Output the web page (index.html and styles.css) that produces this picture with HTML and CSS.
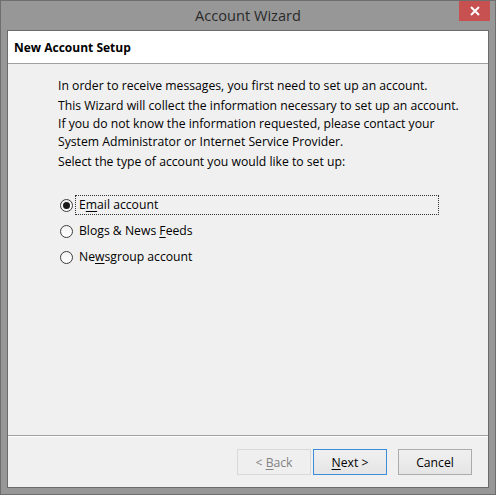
FILE: index.html
```html
<!DOCTYPE html>
<html>
<head>
<meta charset="utf-8">
<link rel="stylesheet" href="styles.css">
</head>
<body>
<div class="window">
  <div class="titlebar">
    <div class="spacer"></div>
    <div class="title">Account Wizard</div>
    <div class="close">
      <svg width="10" height="10" viewBox="0 0 10 10"><path d="M1 1 L9 9 M9 1 L1 9" stroke="#fff" stroke-width="2" fill="none"/></svg>
    </div>
  </div>
  <div class="client">
    <div class="header">New Account Setup</div>
    <div class="main">
      <p class="para">In order to receive messages, you first need to set up an account.</p>
      <p class="para">This Wizard will collect the information necessary to set up an account.<br>If you do not know the information requested, please contact your<br>System Administrator or Internet Service Provider.</p>
      <p class="para">Select the type of account you would like to set up:</p>
      <div class="options">
        <div class="option">
          <span class="radio checked"><span class="dot"></span></span>
          <span class="label focused">E<u>m</u>ail account</span>
        </div>
        <div class="option">
          <span class="radio"></span>
          <span class="label">Blogs &amp; News <u>F</u>eeds</span>
        </div>
        <div class="option">
          <span class="radio"></span>
          <span class="label">Ne<u>w</u>sgroup account</span>
        </div>
      </div>
    </div>
    <div class="footer">
      <div class="btn disabled">&lt;&nbsp;<u>B</u>ack</div>
      <div class="btn default"><u>N</u>ext&nbsp;&gt;</div>
      <div class="btn cancel">Cancel</div>
    </div>
  </div>
</div>
</body>
</html>
```
FILE: styles.css
```css
html, body {
  margin: 0;
  padding: 0;
}
body {
  width: 496px;
  height: 495px;
  font-family: "Open Sans", "Noto Sans", sans-serif;
  font-size: 12.2px;
  color: #000;
}
.window {
  width: 496px;
  height: 495px;
  box-sizing: border-box;
  border: 1px solid #6e6e6e;
  background: #979797;
  display: flex;
  flex-direction: column;
}
.titlebar {
  height: 29px;
  display: grid;
  grid-template-columns: 1fr auto 1fr;
  flex: none;
}
.title {
  font-size: 14.6px;
  color: #2a2a2a;
  line-height: 28px;
  text-align: center;
}
.close {
  justify-self: end;
  align-self: start;
  width: 31px;
  height: 20px;
  margin-right: 5px;
  background: #c75050;
  display: flex;
  align-items: center;
  justify-content: center;
}
.close svg { display: block; }
.client {
  flex: 1;
  margin: 0 6px 6px 6px;
  border: 1px solid #6b6b6b;
  background: #f0f0f0;
  display: flex;
  flex-direction: column;
}
.header {
  height: 32px;
  background: #fff;
  border-bottom: 1px solid #a0a0a0;
  display: flex;
  align-items: center;
  padding-left: 6px;
  font-weight: bold;
  font-size: 12px;
  flex: none;
}
.main {
  flex: 1;
  padding: 13px 0 0 50px;
}
.para {
  margin: 0 0 2px 0;
  line-height: 18px;
}
.options {
  margin-top: 21px;
  display: flex;
  flex-direction: column;
}
.option {
  height: 26px;
  display: flex;
  align-items: center;
}
.radio {
  width: 11px;
  height: 11px;
  margin-left: 2px;
  border: 1px solid #3c3c3c;
  border-radius: 50%;
  background: linear-gradient(#f2f2f2, #ffffff);
  display: flex;
  align-items: center;
  justify-content: center;
}
.dot {
  width: 7px;
  height: 7px;
  border-radius: 50%;
  background: #1a1a1a;
}
.label {
  margin-left: 2px;
  padding: 0 3px;
  height: 18px;
  line-height: 18px;
  border: 1px dotted transparent;
}
.label.focused {
  width: 356px;
  border-color: #333;
}
.footer {
  flex: none;
  border-top: 1px solid #a0a0a0;
  box-shadow: inset 0 1px 0 #fff;
  padding: 13px 16px 12px 0;
  display: flex;
  justify-content: flex-end;
}
.btn {
  width: 72px;
  height: 24px;
  border: 1px solid #acacac;
  background: linear-gradient(#f0f0f0, #e5e5e5);
  display: flex;
  align-items: center;
  justify-content: center;
}
.btn.disabled {
  color: #838383;
  border-color: #d9d9d9;
  background: #efefef;
}
.btn.default {
  margin-left: 2px;
  border-color: #3c8cdc;
  background: linear-gradient(#f0f0f0, #e5e5e5);
}
.btn.cancel {
  margin-left: 11px;
}
u {
  text-decoration: underline;
  text-underline-offset: 2px;
}
```
